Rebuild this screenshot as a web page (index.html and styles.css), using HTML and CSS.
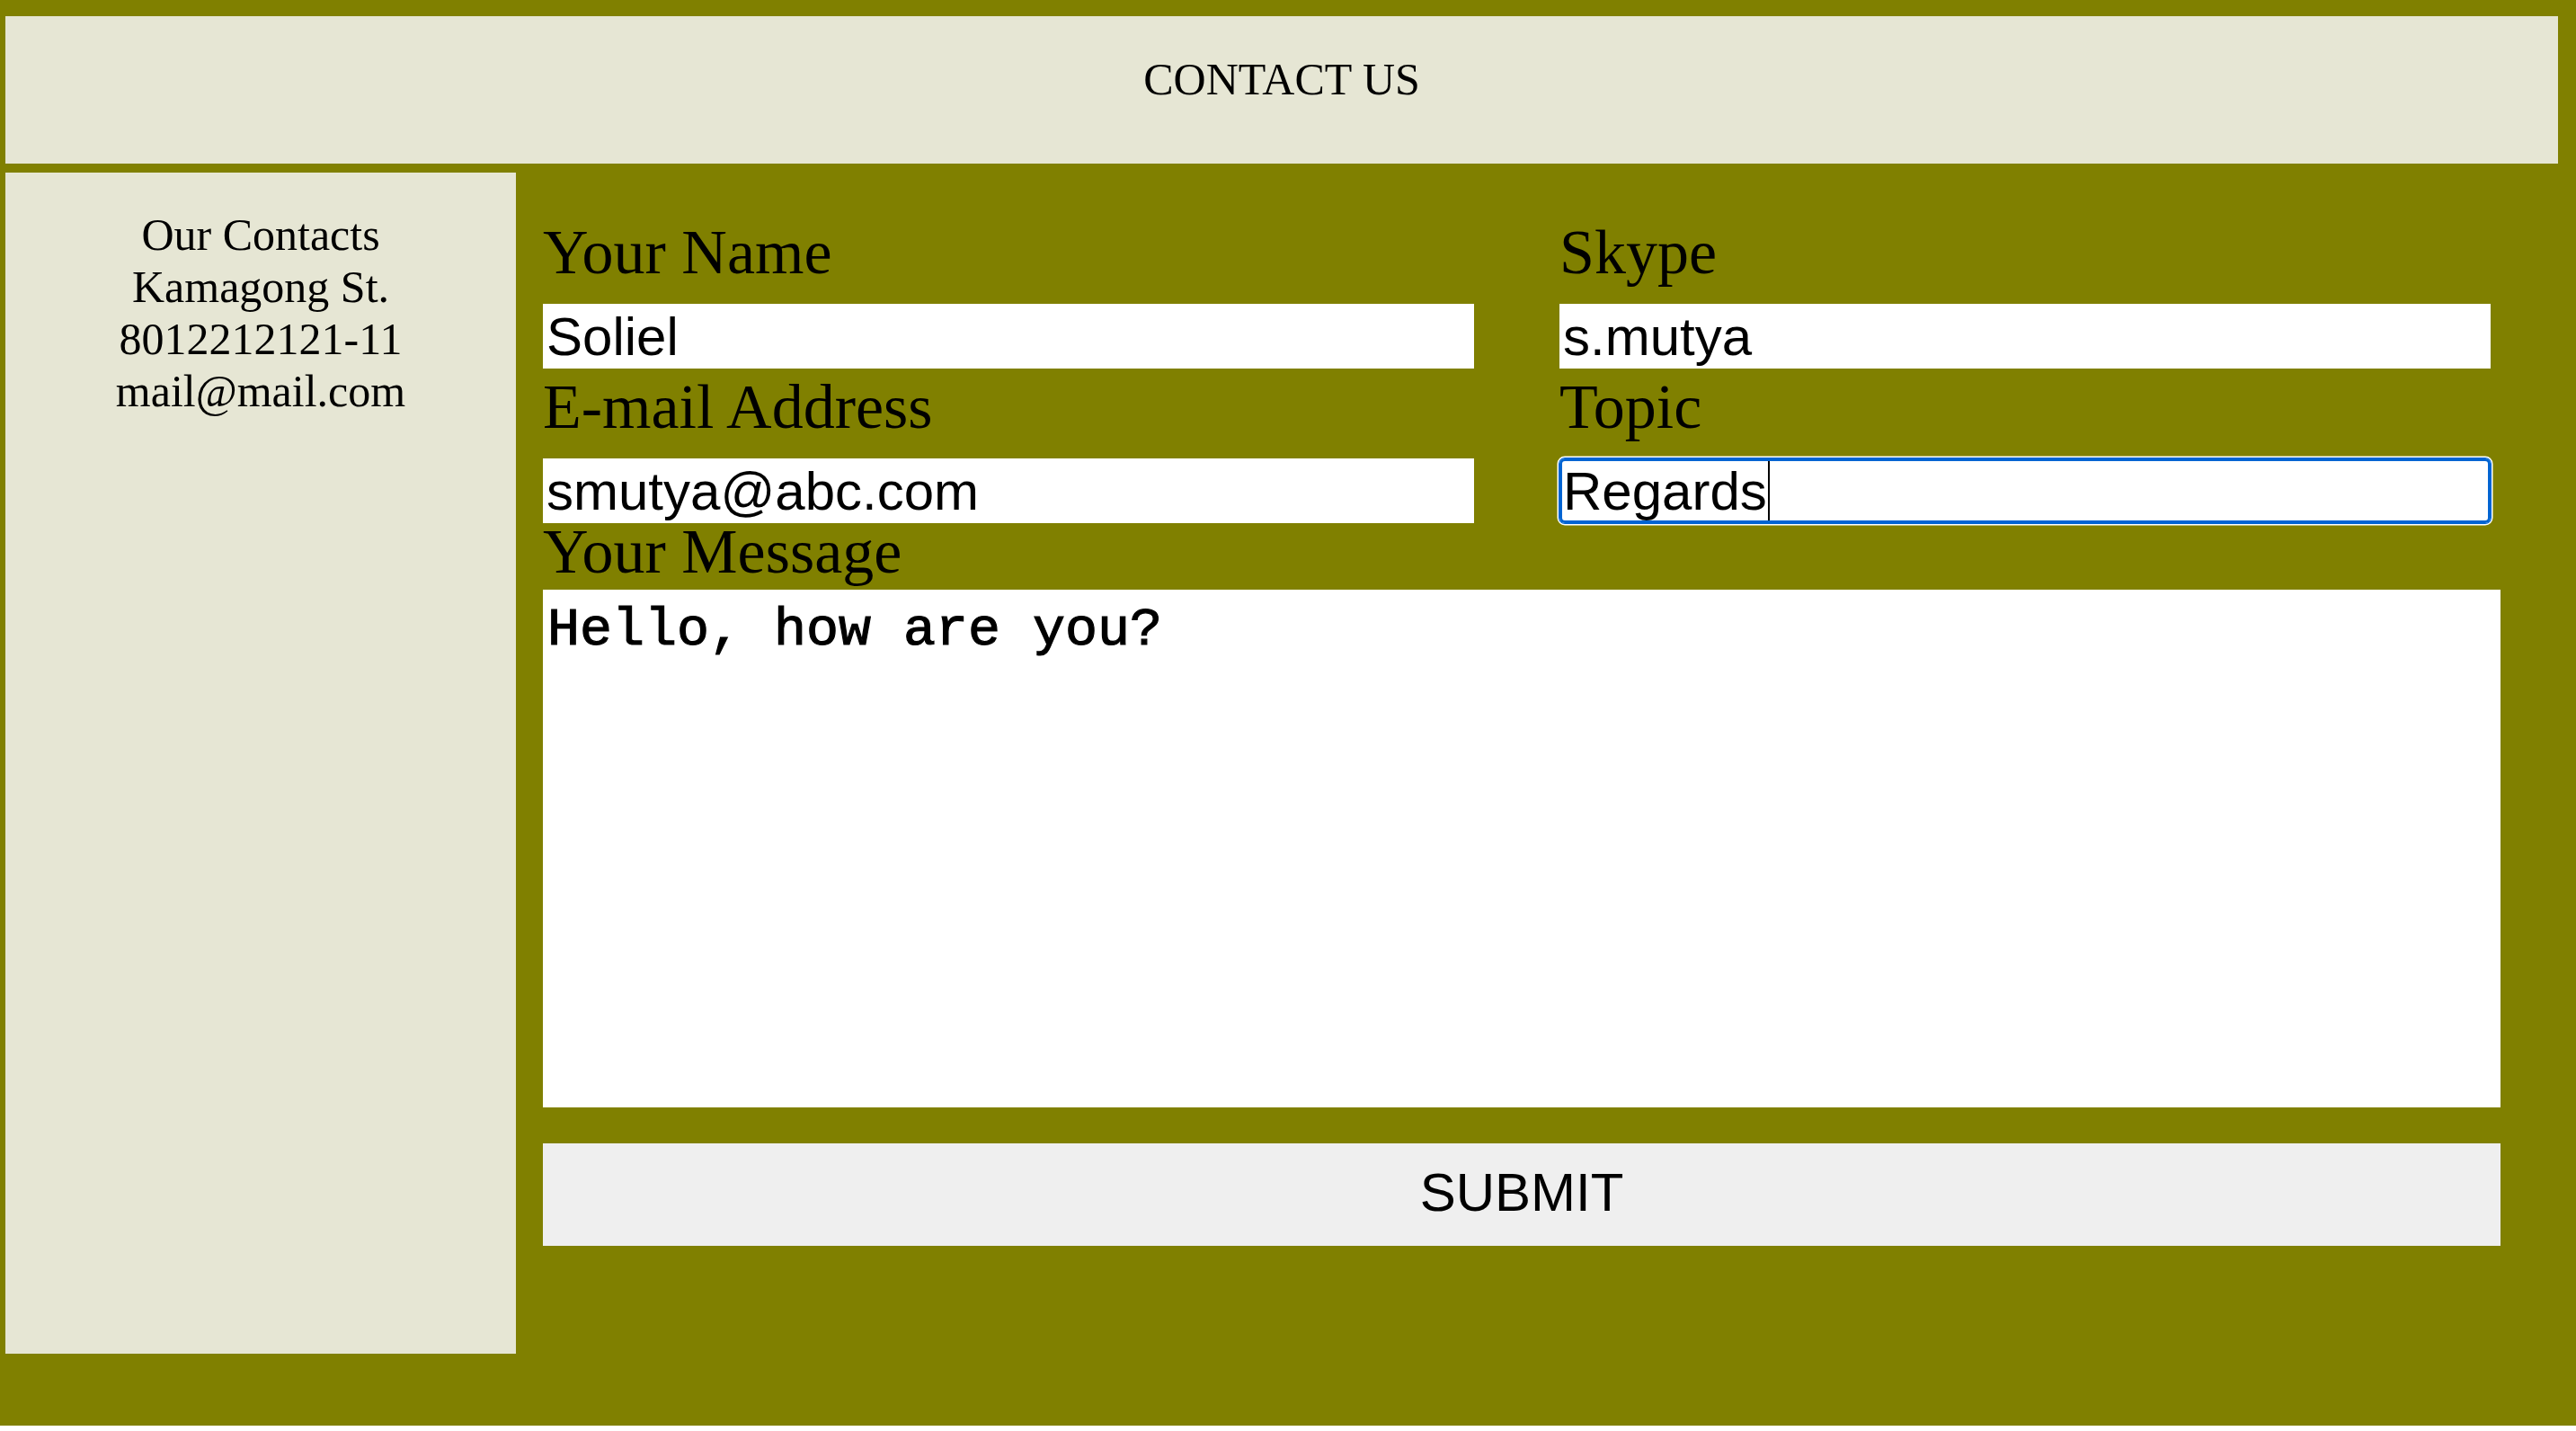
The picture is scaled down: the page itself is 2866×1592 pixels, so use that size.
FILE: index.html
```html
<!DOCTYPE html>
<html lang="en">
<head>
<meta charset="utf-8">
<title>Contact Us</title>
<link rel="stylesheet" href="styles.css">
</head>
<body>
<div class="page">
  <header class="banner">CONTACT US</header>
  <div class="content">
    <aside class="contacts">
      <div>Our Contacts</div>
      <div>Kamagong St.</div>
      <div>8012212121-11</div>
      <div>mail@mail.com</div>
    </aside>
    <form class="form">
      <div class="fields">
        <div class="field">
          <label class="label" for="name">Your Name</label>
          <input class="input" id="name" type="text" value="Soliel">
        </div>
        <div class="field">
          <label class="label" for="skype">Skype</label>
          <input class="input" id="skype" type="text" value="s.mutya">
        </div>
        <div class="field">
          <label class="label" for="email">E-mail Address</label>
          <input class="input" id="email" type="text" value="smutya@abc.com">
        </div>
        <div class="field">
          <label class="label" for="topic">Topic</label>
          <div class="input-wrap">
            <input class="input focused" id="topic" type="text" value="Regards">
            <span class="caret"></span>
          </div>
        </div>
      </div>
      <label class="label message-label" for="msg">Your Message</label>
      <textarea class="message" id="msg">Hello, how are you?</textarea>
      <button class="submit" type="button">SUBMIT</button>
    </form>
  </div>
</div>
</body>
</html>
```
FILE: styles.css
```css
html, body {
  margin: 0;
  padding: 0;
  background: #ffffff;
}

.page {
  background: #808000;
  padding: 18px 20px 80px 6px;
  font-family: "Liberation Serif", "Times New Roman", serif;
  color: #000;
}

.banner {
  box-sizing: border-box;
  height: 164px;
  padding-top: 43px;
  background: #e6e6d4;
  text-align: center;
  font-size: 50px;
  line-height: 55px;
}

.content {
  display: flex;
  margin-top: 10px;
  gap: 30px;
}

.contacts {
  box-sizing: border-box;
  width: 568px;
  height: 1314px;
  flex: none;
  background: #e6e6d4;
  padding-top: 40px;
  text-align: center;
  font-size: 50px;
  line-height: 58px;
}

.form {
  display: flex;
  flex-direction: column;
  width: 2178px;
  padding-top: 51px;
  margin: 0;
}

.fields {
  display: grid;
  grid-template-columns: 1131px 1047px;
  row-gap: 5px;
}

.field {
  display: flex;
  flex-direction: column;
}

.label {
  display: block;
  font-family: "Liberation Serif", "Times New Roman", serif;
  font-size: 70px;
  line-height: 76px;
  height: 76px;
}

.input-wrap {
  position: relative;
  width: 1036px;
  margin-top: 19px;
}

.input {
  box-sizing: border-box;
  width: 1036px;
  height: 72px;
  margin: 19px 0 0 0;
  padding: 0 4px;
  border: none;
  background: #ffffff;
  font-family: "Liberation Sans", Arial, sans-serif;
  font-size: 60px;
  color: #000;
  outline: none;
}

.input-wrap .input {
  margin-top: 0;
}

.input.focused {
  border-radius: 6px;
  box-shadow: inset 0 0 0 3px #0064d2, 0 0 0 1px #0064d2, 0 0 0 2.5px #ffffff;
}

.caret {
  position: absolute;
  left: 232px;
  top: 3px;
  width: 1.5px;
  height: 66px;
  background: #000;
}

.message-label {
  margin-top: -6px;
}

.message {
  box-sizing: border-box;
  display: block;
  width: 2178px;
  height: 576px;
  margin-top: 4px;
  padding: 11px 5px 8px;
  border: none;
  resize: none;
  outline: none;
  background: #ffffff;
  font-family: "Liberation Mono", "Courier New", monospace;
  font-size: 60px;
  color: #000;
  -webkit-text-stroke: 1.2px #000;
}

.submit {
  display: block;
  width: 2178px;
  height: 114px;
  margin-top: 40px;
  padding: 0 0 5px;
  border: none;
  background: #efefef;
  font-family: "Liberation Sans", Arial, sans-serif;
  font-size: 60px;
  color: #000;
}
```
